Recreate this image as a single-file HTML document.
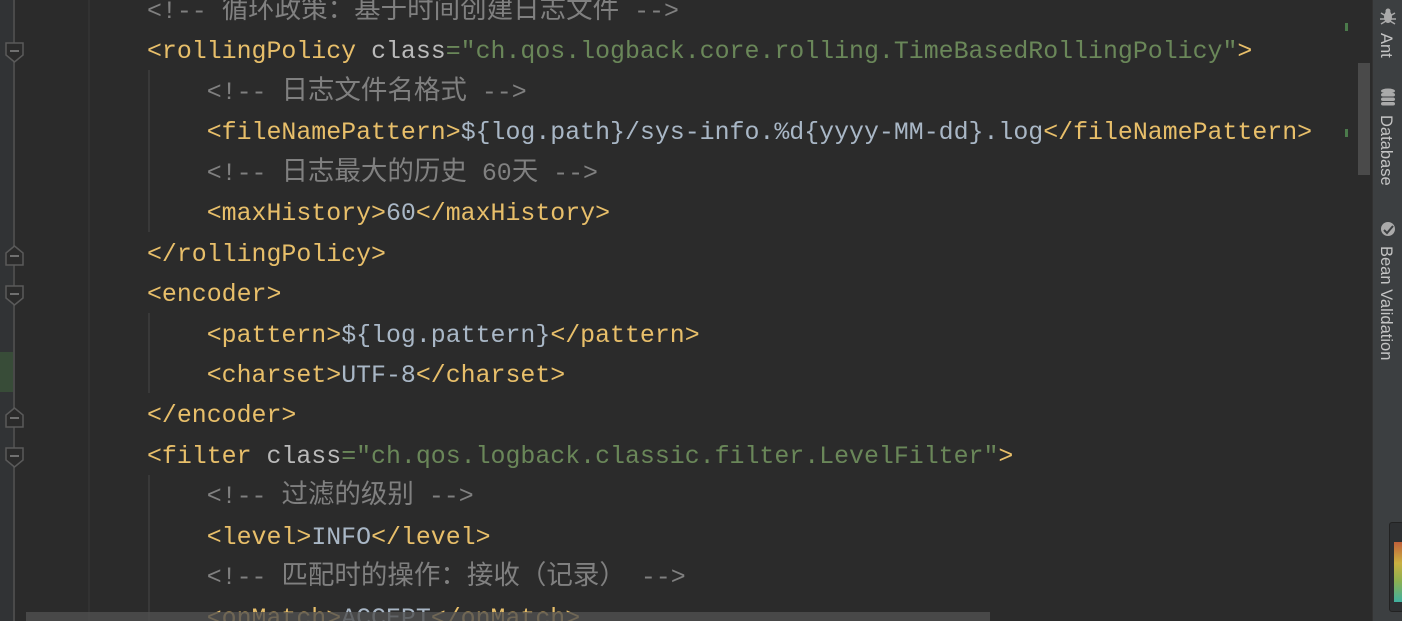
<!DOCTYPE html>
<html><head><meta charset="utf-8"><style>
html,body{margin:0;padding:0;width:1402px;height:621px;overflow:hidden;background:#2b2b2b;position:relative}
.g{position:absolute;left:0;top:0;width:14px;height:621px;background:#313335}
.fold{position:absolute;left:13px;top:0;width:2px;height:621px;background:#4a4a4a}
.sep{position:absolute;left:88px;top:0;width:2px;height:621px;background:#323232}
.code{position:absolute;left:147px;top:-8px;font-family:"Liberation Mono",monospace;font-size:24.9px;color:#a9b7c6}
.code div{height:40.45px;line-height:40.45px;white-space:pre;overflow:visible}
.t{color:#e8bf6a}.a{color:#bababa}.v{color:#6a8759}.c{color:#808080}
.k{font-family:"Noto Sans CJK SC",sans-serif;font-size:26.5px;line-height:0;vertical-align:baseline}
.ig{position:absolute;left:148px;width:2px;background:#393939}
.rp{position:absolute;left:1372px;top:0;width:30px;height:621px;background:#3c3f41;border-left:1px solid #323232}
.vt{position:absolute;left:1376px;font-family:"Liberation Sans",sans-serif;font-size:16.5px;color:#c4c4c4;writing-mode:vertical-rl}
</style></head><body>
<div class="g"></div><div class="fold"></div><div class="sep"></div>
<div style="position:absolute;left:0;top:352px;width:13px;height:40px;background:#384c38"></div>
<div class="ig" style="top:70px;height:162px"></div>
<div class="ig" style="top:313px;height:80px"></div>
<div class="ig" style="top:475px;height:146px"></div>
<svg style="position:absolute;left:0;top:0" width="30" height="621">
<g fill="#2b2b2b" stroke="#5a5a5a" stroke-width="1.5">
<path d="M6 43h17v12l-8.5 7l-8.5-7z"/><path d="M6 265h17v-12l-8.5-7l-8.5 7z"/>
<path d="M6 286h17v12l-8.5 7l-8.5-7z"/><path d="M6 427h17v-12l-8.5-7l-8.5 7z"/>
<path d="M6 448h17v12l-8.5 7l-8.5-7z"/></g>
<g stroke="#888" stroke-width="1.5"><path d="M10 51h9M10 256h9M10 294h9M10 418h9M10 456h9"/></g>
</svg>
<div class="code">
<div><span class="c">&lt;!-- <span class="k">循环政策：基于时间创建日志文件</span> --&gt;</span></div>
<div><span class="t">&lt;rollingPolicy </span><span class="a">class</span><span class="v">="ch.qos.logback.core.rolling.TimeBasedRollingPolicy"</span><span class="t">&gt;</span></div>
<div>    <span class="c">&lt;!-- <span class="k">日志文件名格式</span> --&gt;</span></div>
<div>    <span class="t">&lt;fileNamePattern&gt;</span>${log.path}/sys-info.%d{yyyy-MM-dd}.log<span class="t">&lt;/fileNamePattern&gt;</span></div>
<div>    <span class="c">&lt;!-- <span class="k">日志最大的历史</span> 60<span class="k">天</span> --&gt;</span></div>
<div>    <span class="t">&lt;maxHistory&gt;</span>60<span class="t">&lt;/maxHistory&gt;</span></div>
<div><span class="t">&lt;/rollingPolicy&gt;</span></div>
<div><span class="t">&lt;encoder&gt;</span></div>
<div>    <span class="t">&lt;pattern&gt;</span>${log.pattern}<span class="t">&lt;/pattern&gt;</span></div>
<div>    <span class="t">&lt;charset&gt;</span>UTF-8<span class="t">&lt;/charset&gt;</span></div>
<div><span class="t">&lt;/encoder&gt;</span></div>
<div><span class="t">&lt;filter </span><span class="a">class</span><span class="v">="ch.qos.logback.classic.filter.LevelFilter"</span><span class="t">&gt;</span></div>
<div>    <span class="c">&lt;!-- <span class="k">过滤的级别</span> --&gt;</span></div>
<div>    <span class="t">&lt;level&gt;</span>INFO<span class="t">&lt;/level&gt;</span></div>
<div>    <span class="c">&lt;!-- <span class="k">匹配时的操作：接收（记录）</span> --&gt;</span></div>
<div>    <span class="t">&lt;onMatch&gt;</span>ACCEPT<span class="t">&lt;/onMatch&gt;</span></div>
</div>
<div style="position:absolute;left:26px;top:612px;width:964px;height:9px;background:rgba(80,80,80,0.8)"></div>
<div style="position:absolute;left:1345px;top:23px;width:3px;height:8px;background:#4b7a4b"></div>
<div style="position:absolute;left:1345px;top:129px;width:3px;height:8px;background:#4b7a4b"></div>
<div style="position:absolute;left:1358px;top:63px;width:12px;height:112px;background:#4a4a4a"></div>
<div class="rp"></div>
<svg style="position:absolute;left:1379px;top:7px" width="18" height="18"><g fill="#aaa"><ellipse cx="9" cy="10" rx="4" ry="6"/><circle cx="9" cy="4" r="2.5"/><path d="M2 6l5 3M16 6l-5 3M1 12h16M2 17l5-3M16 17l-5-3" stroke="#aaa" stroke-width="1.5"/></g></svg>
<div class="vt" style="top:33px">Ant</div>
<svg style="position:absolute;left:1380px;top:88px" width="16" height="18"><g fill="#aaa"><ellipse cx="8" cy="3" rx="7" ry="2.5"/><rect x="1" y="5" width="14" height="3.5" rx="2"/><rect x="1" y="9.5" width="14" height="3.5" rx="2"/><rect x="1" y="14" width="14" height="3.5" rx="2"/></g></svg>
<div class="vt" style="top:115px">Database</div>
<svg style="position:absolute;left:1380px;top:221px" width="16" height="16"><circle cx="8" cy="8" r="7" fill="#aaa"/><path d="M4 9l3 3l6-7" stroke="#3c3f41" stroke-width="2" fill="none"/></svg>
<div class="vt" style="top:246px">Bean Validation</div>
<div style="position:absolute;left:1389px;top:522px;width:13px;height:88px;background:#2e3032;border-radius:3px;border:1px solid #222"></div>
<div style="position:absolute;left:1394px;top:542px;width:8px;height:60px;background:linear-gradient(#c0603a,#c9b040 35%,#8cb050 65%,#40b0a0)"></div>
</body></html>
